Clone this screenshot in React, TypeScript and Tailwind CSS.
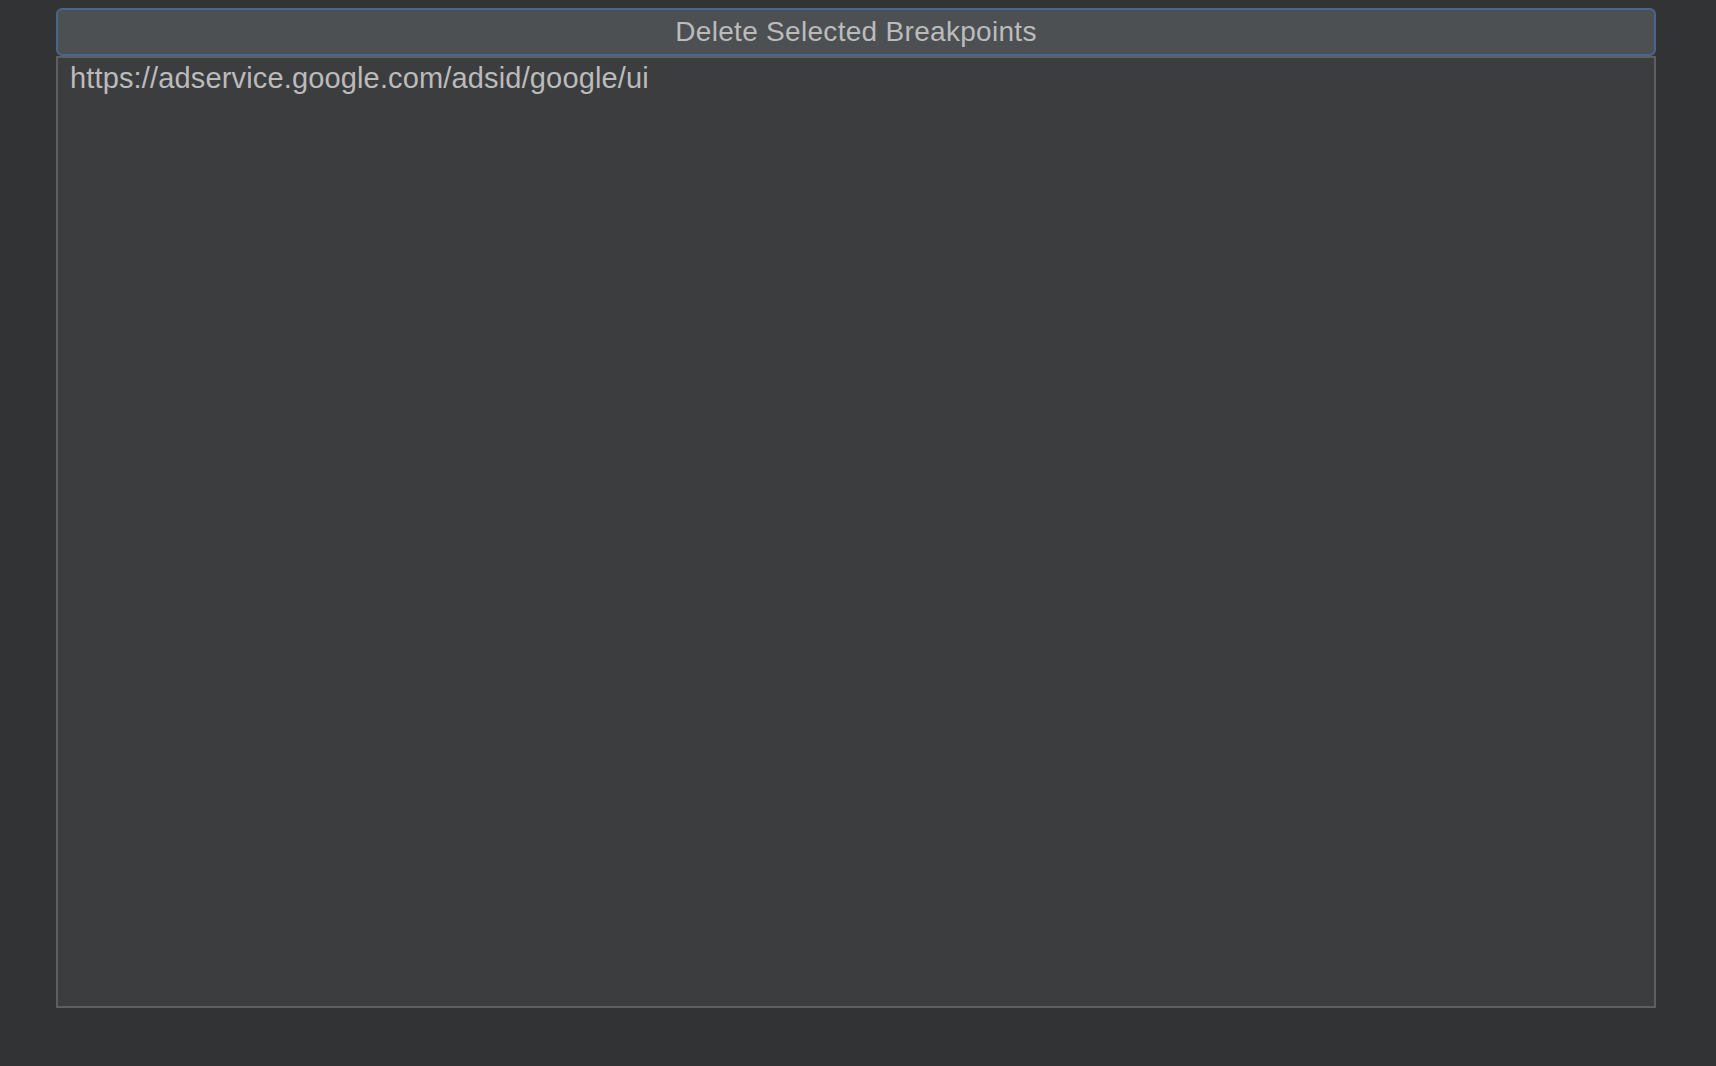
import React from 'react'

const breakpoints = ['https://adservice.google.com/adsid/google/ui']

const App: React.FC = () => {
  return (
    <div className="h-[1066px] w-[1716px] bg-[#323335] pt-[8px] pl-[56px] font-['Liberation_Sans',Arial,sans-serif] text-[#bbbbbb]">
      <div className="flex w-[1600px] flex-col">
        <button className="h-[48px] w-full rounded-[6px] border-2 border-[#4a6490] bg-[#4c5053] text-[28px] leading-none tracking-[0.3px] text-[#bbbbbb]">
          Delete Selected Breakpoints
        </button>
        <ul className="h-[952px] w-full border-2 border-[#5e5f60] bg-[#3c3d3f] px-[12px] pt-[4px]">
          {breakpoints.map((b) => (
            <li key={b} className="text-[29px] leading-[32px] tracking-[0.15px]">{b}</li>
          ))}
        </ul>
      </div>
    </div>
  )
}

export default App
